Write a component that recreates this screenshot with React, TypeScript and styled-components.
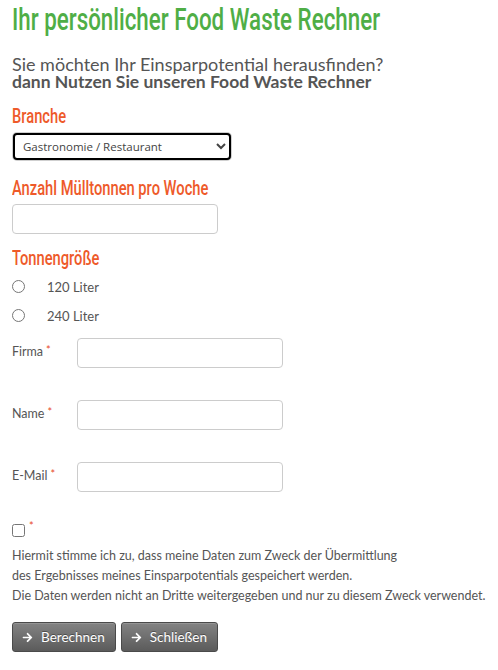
import React, { useState } from 'react';
import styled, { createGlobalStyle } from 'styled-components';
import { FaArrowRight } from 'react-icons/fa';

const Global = createGlobalStyle`
    body {
        margin: 0;
        background: #fff;
        font-family: Lato, "Open Sans", sans-serif;
        color: #555;
    }
`;

const Page = styled.div`
    padding: 0 12px 20px 12px;
    width: 498px;
    box-sizing: border-box;
`;

// condensed display face: Roboto squeezed to the width of the original
const Title = styled.h1`
    font-family: Roboto, sans-serif;
    font-weight: 500;
    font-size: 31px;
    line-height: 40px;
    color: #4fae46;
    margin: 0 0 15px 0;
    white-space: nowrap;
    transform: scaleX(0.721);
    transform-origin: left center;
`;

const Intro = styled.p`
    margin: 0 0 12px 0;
    font-size: 18px;
    line-height: 18px;
    color: #555;
`;

const Strong = styled.strong`
    font-weight: 700;
    font-size: 17.5px;
    display: block;
`;

const Section = styled.h3<{ $mb?: number }>`
    font-family: Roboto, sans-serif;
    font-weight: 500;
    font-size: 21px;
    line-height: 26px;
    color: #ee5a2a;
    margin: 0 0 ${(p) => p.$mb ?? 4}px 0;
    white-space: nowrap;
    transform: scaleX(0.7);
    transform-origin: left center;
`;

const Select = styled.select`
    display: block;
    width: 218px;
    height: 27px;
    border: 2px solid #000;
    border-radius: 4px;
    box-shadow: 0 0 0 1px #cfcfcf;
    font-family: "Open Sans", sans-serif;
    font-size: 11.5px;
    color: #444;
    background: #fff;
    padding: 0 4px;
    margin: 0 0 15px 1px;
`;

const TextInput = styled.input`
    display: block;
    box-sizing: border-box;
    width: 206px;
    height: 30px;
    border: 1px solid #ccc;
    border-radius: 4px;
    background: #fff;
    margin: 0;
`;

const Group = styled.div<{ $mb: number }>`
    margin-bottom: ${(p) => p.$mb}px;
`;

const RadioRow = styled.label`
    display: flex;
    align-items: center;
    height: 29px;
    font-size: 13px;
    color: #555;
    input {
        margin: 0 22px 0 0;
        width: 13px;
        height: 13px;
    }
`;

const FieldRow = styled.div`
    display: grid;
    grid-template-columns: 65px 206px;
    align-items: center;
    height: 30px;
    margin-bottom: 32px;
`;

const Label = styled.label`
    font-size: 12.5px;
    color: #555;
    margin-top: -5px;
`;

const Req = styled.span`
    color: #e8482a;
    font-size: 11px;
    margin-left: 3px;
    vertical-align: 2px;
`;

const CheckWrap = styled.div`
    display: flex;
    align-items: flex-start;
    height: 14px;
    input {
        margin: 0;
        width: 13px;
        height: 13px;
    }
    span {
        margin-top: -5px;
        margin-left: 4px;
    }
`;

const Consent = styled.p`
    font-size: 12.5px;
    line-height: 20px;
    color: #555;
    white-space: nowrap;
    margin: 8px 0 16px 0;
`;

const Buttons = styled.div`
    display: flex;
    gap: 5px;
`;

const Btn = styled.button`
    display: flex;
    align-items: center;
    gap: 8px;
    height: 30px;
    padding: 0 10px 0 9px;
    border: 1px solid #4a4a4a;
    border-radius: 3px;
    background: linear-gradient(#838383, #5b5b5b);
    box-shadow: inset 0 1px 0 rgba(255, 255, 255, 0.15);
    color: #fff;
    font-family: Lato, sans-serif;
    font-size: 13.5px;
    text-shadow: 0 -1px 0 rgba(0, 0, 0, 0.35);
    cursor: pointer;
    svg {
        width: 11px;
        height: 11px;
    }
`;

export default function App() {
    const [size, setSize] = useState('');
    return (
        <Page>
            <Global />
            <Title>Ihr persönlicher Food Waste Rechner</Title>
            <Intro>
                Sie möchten Ihr Einsparpotential herausfinden?
                <Strong>dann Nutzen Sie unseren Food Waste Rechner</Strong>
            </Intro>
            <Section>Branche</Section>
            <Select defaultValue="gastro">
                <option value="gastro">Gastronomie / Restaurant</option>
                <option value="hotel">Hotel</option>
                <option value="handel">Handel</option>
            </Select>
            <Section $mb={3}>Anzahl Mülltonnen pro Woche</Section>
            <Group $mb={11}>
                <TextInput type="text" />
            </Group>
            <Section $mb={1}>Tonnengröße</Section>
            <Group $mb={8}>
                <RadioRow>
                    <input type="radio" name="size" checked={size === '120'} onChange={() => setSize('120')} />
                    120 Liter
                </RadioRow>
                <RadioRow>
                    <input type="radio" name="size" checked={size === '240'} onChange={() => setSize('240')} />
                    240 Liter
                </RadioRow>
            </Group>
            <FieldRow>
                <Label>Firma<Req>*</Req></Label>
                <TextInput type="text" />
            </FieldRow>
            <FieldRow>
                <Label>Name<Req>*</Req></Label>
                <TextInput type="text" />
            </FieldRow>
            <FieldRow>
                <Label>E-Mail<Req>*</Req></Label>
                <TextInput type="email" />
            </FieldRow>
            <CheckWrap>
                <input type="checkbox" />
                <Req>*</Req>
            </CheckWrap>
            <Consent>
                Hiermit stimme ich zu, dass meine Daten zum Zweck der Übermittlung<br />
                des Ergebnisses meines Einsparpotentials gespeichert werden.<br />
                Die Daten werden nicht an Dritte weitergegeben und nur zu diesem Zweck verwendet.
            </Consent>
            <Buttons>
                <Btn><FaArrowRight />Berechnen</Btn>
                <Btn><FaArrowRight />Schließen</Btn>
            </Buttons>
        </Page>
    );
}
